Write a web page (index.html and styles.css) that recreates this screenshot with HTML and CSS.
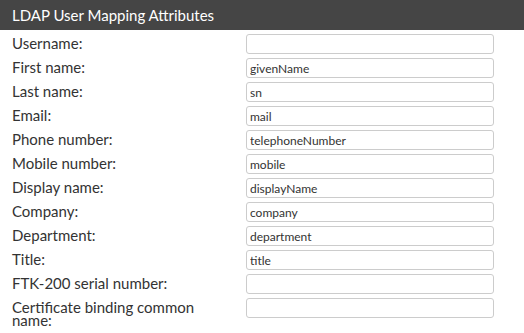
FILE: index.html
```html
<!DOCTYPE html>
<html lang="en">
<head>
  <meta charset="UTF-8" />
  <title>LDAP User Mapping Attributes</title>
  <link rel="stylesheet" href="styles.css">
</head>
<body>

  <div class="section-title">LDAP User Mapping Attributes</div>

  <div class="mapping-form">
    <label class="field-label">Username:</label>
    <input type="text" class="field-input" value="">

    <label class="field-label">First name:</label>
    <input type="text" class="field-input" value="givenName">

    <label class="field-label">Last name:</label>
    <input type="text" class="field-input" value="sn">

    <label class="field-label">Email:</label>
    <input type="text" class="field-input" value="mail">

    <label class="field-label">Phone number:</label>
    <input type="text" class="field-input" value="telephoneNumber">

    <label class="field-label">Mobile number:</label>
    <input type="text" class="field-input" value="mobile">

    <label class="field-label">Display name:</label>
    <input type="text" class="field-input" value="displayName">

    <label class="field-label">Company:</label>
    <input type="text" class="field-input" value="company">

    <label class="field-label">Department:</label>
    <input type="text" class="field-input" value="department">

    <label class="field-label">Title:</label>
    <input type="text" class="field-input" value="title">

    <label class="field-label">FTK-200 serial number:</label>
    <input type="text" class="field-input" value="">

    <label class="field-label">Certificate binding common name:</label>
    <input type="text" class="field-input" value="">
  </div>

</body>
</html>
```

FILE: styles.css
```css
body {
  font-family: Lato, "Open Sans", sans-serif;
  background-color: #fff;
  color: #333;
  margin: 0;
}

.section-title {
  background-color: #454545;
  color: #fff;
  font-size: 15px;
  height: 30px;
  line-height: 30px;
  padding-left: 12px;
}

.mapping-form {
  display: grid;
  grid-template-columns: 200px 248px;
  column-gap: 34px;
  row-gap: 4px;
  padding: 4px 12px 0;
}

.field-label {
  font-size: 15px;
  line-height: 13px;
  padding-top: 3px;
}

.field-input {
  box-sizing: border-box;
  height: 20px;
  margin: 0;
  padding: 0 3px;
  border: 1px solid #ccc;
  border-radius: 3px;
  font-family: Lato, sans-serif;
  font-size: 12px;
  color: #333;
}
```
